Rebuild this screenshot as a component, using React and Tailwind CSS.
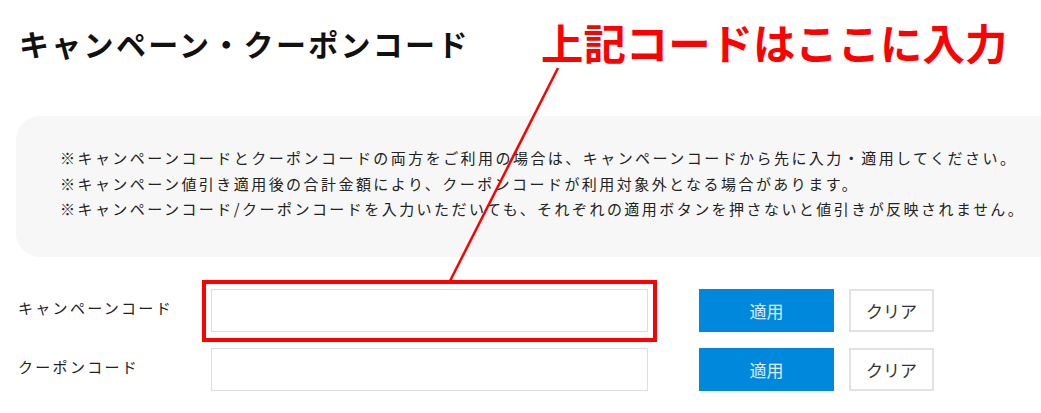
import React from 'react';

const notes = [
    '※キャンペーンコードとクーポンコードの両方をご利用の場合は、キャンペーンコードから先に入力・適用してください。',
    '※キャンペーン値引き適用後の合計金額により、クーポンコードが利用対象外となる場合があります。',
    '※キャンペーンコード/クーポンコードを入力いただいても、それぞれの適用ボタンを押さないと値引きが反映されません。',
];

const rows = [
    { id: 'campaign', label: 'キャンペーンコード' },
    { id: 'coupon', label: 'クーポンコード' },
];

function CodeRow({ label }) {
    return (
        <div className="flex items-center h-[43px]">
            <label className="w-[211px] shrink-0 pl-[18px] pb-[5px] text-[15px] tracking-[2.3px] text-[#222]">{label}</label>
            <input type="text" className="w-[437px] shrink-0 h-[43px] border border-[#dddddd] bg-white px-3 outline-none" />
            <button className="ml-[51px] w-[135px] shrink-0 h-[43px] bg-[#0088dd] text-white/85 text-[17px]">適用</button>
            <button className="ml-[15px] w-[85px] shrink-0 h-[43px] border-2 border-[#e2e2e2] bg-white text-[#333] text-[17px]">クリア</button>
        </div>
    );
}

export default function App() {
    return (
        <div className="relative w-[1041px] h-[413px] overflow-hidden bg-white" style={{ fontFamily: '"Noto Sans CJK JP", "Noto Sans", sans-serif' }}>
            <h1 className="pt-[21px] pl-[19px] text-[30px] leading-[44px] font-bold tracking-[2.3px] text-[#111]">
                キャンペーン・クーポンコード
            </h1>

            <div className="mt-[51px] ml-[16px] w-[1060px] h-[141px] rounded-[24px] bg-[#f7f7f7] pt-[29px] pl-[44px]">
                {notes.map((note, i) => (
                    <p key={i} className="text-[15px] leading-[25.5px] tracking-[2.45px] text-[#222] whitespace-nowrap">{note}</p>
                ))}
            </div>

            <div className="mt-[32px] flex flex-col gap-[16px]">
                {rows.map((row) => (
                    <CodeRow key={row.id} label={row.label} />
                ))}
            </div>

            {/* annotation overlay */}
            <p className="absolute left-[541px] top-[21px] text-[42.4px] leading-[42px] font-bold text-[#ff0000] whitespace-nowrap">
                上記コードはここに入力
            </p>
            <svg className="absolute left-0 top-0 pointer-events-none" width="1041" height="413">
                <line x1="558" y1="68" x2="450" y2="281" stroke="#ff0000" strokeWidth="2.5" />
            </svg>
            <div className="absolute left-[202px] top-[280px] w-[455px] h-[62px] border-4 border-[#ff0000] pointer-events-none" />
        </div>
    );
}
